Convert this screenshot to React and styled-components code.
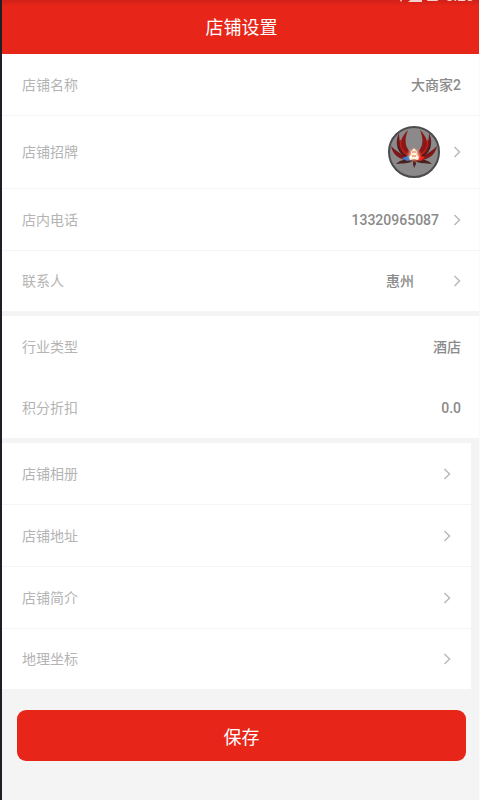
import React from 'react';
import styled, { createGlobalStyle } from 'styled-components';

const GlobalStyle = createGlobalStyle`
  * {
    box-sizing: border-box;
  }

  body {
    margin: 0;
    background: #f4f4f4;
    font-family: Roboto, "Noto Sans CJK SC", sans-serif;
  }
`;

const Page = styled.div`
  display: flex;
  flex-direction: column;
  min-height: 100vh;
  border-left: 2px solid #1e1e26;
  border-right: 1px solid #fafafa;
  background: #f4f4f4;
`;

const Header = styled.header`
  display: flex;
  flex-direction: column;
  height: 54px;
  background: linear-gradient(#cf2118, #e82519 6px);
  color: #fff;
`;

const StatusBar = styled.div`
  display: flex;
  justify-content: flex-end;
  align-items: flex-end;
  gap: 6px;
  height: 3px;
  padding-right: 5px;
  overflow: hidden;
  color: #f6d0cc;
`;

const Clock = styled.time`
  font-size: 15px;
  line-height: 12px;
`;

const Title = styled.h1`
  margin: 0;
  padding-left: 2px;
  font-size: 18px;
  font-weight: 400;
  line-height: 52px;
  text-align: center;
`;

const Group = styled.ul`
  margin: 0 ${(props) => (props.$inset ? '8px' : '0')} 5px 0;
  padding: 0;
  list-style: none;
  background: #fff;
`;

const Row = styled.li`
  display: flex;
  align-items: center;
  height: ${(props) => (props.$tall ? '73px' : '62px')};
  padding: 0 ${(props) => (props.$inset ? '20px' : '18px')} 0 20px;
  border-bottom: 1px solid ${(props) => (props.$plain ? '#fff' : '#f4f4f4')};
  font-size: 14px;
  line-height: 20px;

  &:last-child {
    height: 60px;
    border-bottom: 0;
  }
`;

const Label = styled.span`
  flex: 1;
  color: #b4b4b4;
`;

const Value = styled.span`
  margin-right: ${(props) => props.$space || '0'};
  color: #8a8a8a;
  font-weight: 500;
`;

const Logo = styled.svg`
  display: block;
  margin-right: 12px;
`;

const More = styled.button`
  display: flex;
  padding: 0;
  border: 0;
  background: none;
  color: #bcbcbc;
  cursor: pointer;
`;

const SaveButton = styled.button`
  height: 51px;
  margin: 16px 13px 0 15px;
  border: 0;
  border-radius: 9px;
  background: #e82519;
  color: #fff;
  font-family: inherit;
  font-size: 18px;
  cursor: pointer;
`;

const StatusIcons = () => (
  <svg width="43" height="12" viewBox="0 0 43 12" fill="currentColor" aria-hidden="true">
    <path d="M0 3h10L5 12z" />
    <path d="M12 12L26 0v12z" />
    <rect x="31" y="1" width="11" height="10" rx="1" />
  </svg>
);

const MoreButton = ({ label }) => (
  <More type="button" aria-label={label}>
    <svg width="8" height="12" viewBox="0 0 8 12" fill="none" stroke="currentColor" strokeWidth="1.6">
      <path d="M1.5 1l5 5-5 5" />
    </svg>
  </More>
);

const Wing = () => (
  <>
    <path d="M26 32C15 31 7 19 21 5C16 17 19 25 27 30z" fill="#8c1717" />
    <path d="M24 34C13 31 6 21 12 8C12 20 16 28 26 33z" fill="#6a1819" />
    <path d="M25 35C14 36 6 31 4 21C11 28 17 31 26 33z" fill="#7d1719" />
    <path d="M26 34C18 34 13 35 9 39C16 38 21 39 26 36z" fill="#47201f" />
    <path d="M14 15C12 22 16 28 23 31" fill="none" stroke="#bd211c" strokeWidth="1.5" />
    <path d="M11 22C13 28 17 31 22 33" fill="none" stroke="#351a1e" />
  </>
);

const ShopLogo = () => (
  <Logo width="54" height="54" viewBox="0 0 54 54" role="img" aria-label="店铺招牌">
    <defs>
      <radialGradient id="glow">
        <stop offset="0" stopColor="#fff" />
        <stop offset="0.4" stopColor="#ffd9b8" stopOpacity="0.9" />
        <stop offset="1" stopColor="#ff6a50" stopOpacity="0" />
      </radialGradient>
    </defs>
    <circle cx="27" cy="27" r="25" fill="#8b8989" stroke="#4b4b4e" strokeWidth="2" />
    <Wing />
    <g transform="matrix(-1 0 0 1 54 0)">
      <Wing />
    </g>
    <path d="M26 33h2l1 6-2 4-1-4z" fill="#4b2023" />
    <path d="M15 33l8-3 2 5-5 1z" fill="#3a7ed0" />
    <path d="M30 30l8 2-4 4-5-1z" fill="#f2231b" />
    <circle cx="27" cy="30" r="8" fill="url(#glow)" />
    <path d="M27 23l3 4-1 2 3 3-1 3-4-1-4 1-1-3 3-3-1-2z" fill="#fff3df" />
    <path d="M25 27h4M25 31h4" stroke="#d2733f" />
  </Logo>
);

const App = () => (
  <>
    <GlobalStyle />
    <Page>
      <Header>
        <StatusBar>
          <StatusIcons />
          <Clock>5:26</Clock>
        </StatusBar>
        <Title>店铺设置</Title>
      </Header>

      <Group>
        <Row>
          <Label>店铺名称</Label>
          <Value>大商家2</Value>
        </Row>
        <Row $tall>
          <Label>店铺招牌</Label>
          <ShopLogo />
          <MoreButton label="店铺招牌" />
        </Row>
        <Row>
          <Label>店内电话</Label>
          <Value $space="14px">13320965087</Value>
          <MoreButton label="店内电话" />
        </Row>
        <Row>
          <Label>联系人</Label>
          <Value $space="39px">惠州</Value>
          <MoreButton label="联系人" />
        </Row>
      </Group>

      <Group>
        <Row $plain>
          <Label>行业类型</Label>
          <Value>酒店</Value>
        </Row>
        <Row>
          <Label>积分折扣</Label>
          <Value>0.0</Value>
        </Row>
      </Group>

      <Group $inset>
        {['店铺相册', '店铺地址', '店铺简介', '地理坐标'].map((name) => (
          <Row key={name} $inset>
            <Label>{name}</Label>
            <MoreButton label={name} />
          </Row>
        ))}
      </Group>

      <SaveButton type="button">保存</SaveButton>
    </Page>
  </>
);

export default App;
